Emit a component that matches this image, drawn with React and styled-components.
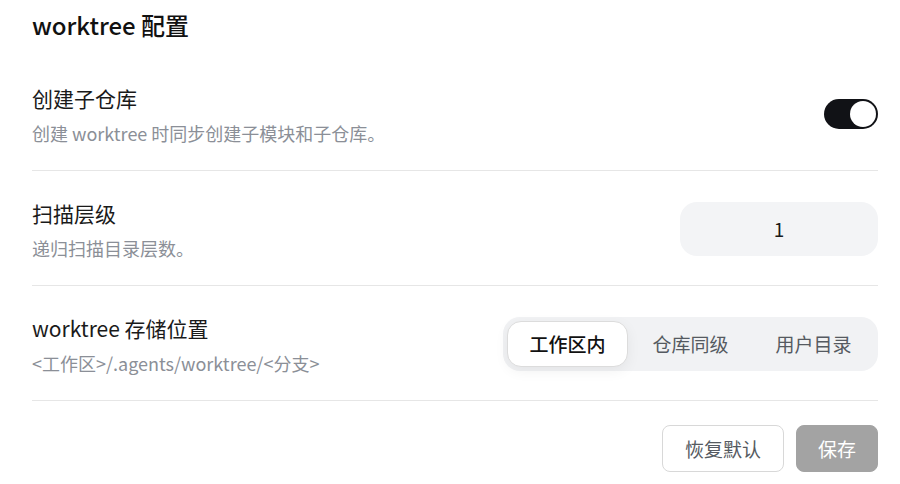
import React, { useState } from "react";
import styled, { createGlobalStyle } from "styled-components";

const GlobalStyle = createGlobalStyle`
  html, body {
    margin: 0;
    padding: 0;
    background: #ffffff;
  }
  body {
    font-family: "Noto Sans CJK SC", "Noto Sans", sans-serif;
    color: #1a1a1a;
  }
`;

const Page = styled.div`
  width: 900px;
  height: 484px;
  box-sizing: border-box;
  padding: 8px 22px 0 32px;
  overflow: hidden;
`;

const Title = styled.h2`
  margin: 0 0 14px;
  font-size: 24px;
  font-weight: 500;
  line-height: 34px;
  color: #111;
`;

const Row = styled.div`
  display: flex;
  align-items: center;
  justify-content: space-between;
  padding: 26px 0 25px;
  border-bottom: 1px solid #e6e6e6;
`;

const Text = styled.div`
  display: flex;
  flex-direction: column;
  gap: 9px;
  padding-top: 2px;
`;

const Label = styled.div`
  font-size: 21px;
  line-height: 28px;
  color: #1a1a1a;
`;

const Desc = styled.div`
  font-size: 18px;
  line-height: 24px;
  color: #8b8f97;
`;

const Toggle = styled.button`
  width: 54px;
  height: 30px;
  border: none;
  padding: 2px;
  border-radius: 15px;
  background: ${(p) => (p.$on ? "#111216" : "#d4d4d8")};
  display: flex;
  justify-content: ${(p) => (p.$on ? "flex-end" : "flex-start")};
  cursor: pointer;
`;

const Knob = styled.span`
  width: 26px;
  height: 26px;
  border-radius: 50%;
  background: #fff;
`;

const NumberInput = styled.input`
  width: 198px;
  height: 54px;
  box-sizing: border-box;
  border: none;
  border-radius: 17px;
  background: #f3f4f6;
  text-align: center;
  font-family: inherit;
  font-size: 19px;
  color: #1a1a1a;
  outline: none;
`;

const Segmented = styled.div`
  display: flex;
  gap: 2px;
  padding: 4px;
  border-radius: 17px;
  background: #f1f2f4;
`;

const Segment = styled.button`
  width: 121px;
  height: 46px;
  box-sizing: border-box;
  border-radius: 14px;
  border: 1px solid ${(p) => (p.$active ? "#dcdcdc" : "transparent")};
  background: ${(p) => (p.$active ? "#ffffff" : "transparent")};
  box-shadow: ${(p) => (p.$active ? "0 4px 14px rgba(0,0,0,0.06)" : "none")};
  font-family: inherit;
  font-size: 19px;
  font-weight: ${(p) => (p.$active ? 500 : 400)};
  color: ${(p) => (p.$active ? "#111" : "#555a61")};
  cursor: pointer;
`;

const Footer = styled.div`
  display: flex;
  justify-content: flex-end;
  gap: 12px;
  padding-top: 24px;
`;

const Button = styled.button`
  height: 47px;
  padding: 0 ${(p) => (p.$primary ? "21px" : "22px")};
  border-radius: 8px;
  border: 1px solid ${(p) => (p.$primary ? "#a3a3a3" : "#d8d8d8")};
  background: ${(p) => (p.$primary ? "#a3a3a3" : "#ffffff")};
  color: ${(p) => (p.$primary ? "#ffffff" : "#555a61")};
  font-family: inherit;
  font-size: 19px;
  cursor: pointer;
`;

const locations = ["工作区内", "仓库同级", "用户目录"];

export default function App() {
  const [sub, setSub] = useState(true);
  const [depth, setDepth] = useState("1");
  const [loc, setLoc] = useState(locations[0]);

  return (
    <>
      <GlobalStyle />
      <Page>
        <Title>worktree 配置</Title>

        <Row>
          <Text>
            <Label>创建子仓库</Label>
            <Desc>创建 worktree 时同步创建子模块和子仓库。</Desc>
          </Text>
          <Toggle $on={sub} onClick={() => setSub(!sub)}>
            <Knob />
          </Toggle>
        </Row>

        <Row>
          <Text>
            <Label>扫描层级</Label>
            <Desc>递归扫描目录层数。</Desc>
          </Text>
          <NumberInput value={depth} onChange={(e) => setDepth(e.target.value)} />
        </Row>

        <Row>
          <Text>
            <Label>worktree 存储位置</Label>
            <Desc>&lt;工作区&gt;/.agents/worktree/&lt;分支&gt;</Desc>
          </Text>
          <Segmented>
            {locations.map((name) => (
              <Segment key={name} $active={loc === name} onClick={() => setLoc(name)}>
                {name}
              </Segment>
            ))}
          </Segmented>
        </Row>

        <Footer>
          <Button>恢复默认</Button>
          <Button $primary>保存</Button>
        </Footer>
      </Page>
    </>
  );
}
